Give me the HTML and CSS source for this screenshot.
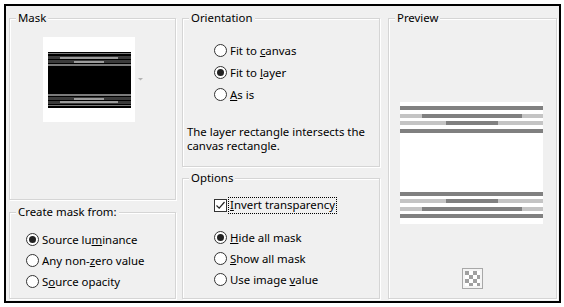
FILE: index.html
```html
<!DOCTYPE html>
<html>
<head>
  <title>Mask dialog</title>
  <link rel="stylesheet" href="styles.css">
</head>
<body>
  <div class="dialog">
    <div class="col col-left">
      <fieldset class="group mask-group">
        <legend>Mask</legend>
        <div class="mask-row">
          <div class="mask-thumb">
            <svg width="83" height="56" viewBox="0 0 83 56">
              <rect width="83" height="56" fill="#000"/>
              <rect y="1" width="83" height="1" fill="#7a7a7a"/>
              <rect y="4" width="83" height="3" fill="#3a3a3a"/>
              <rect x="12" y="5" width="58" height="2" fill="#9c9c9c"/>
              <rect y="8" width="83" height="3" fill="#3a3a3a"/>
              <rect x="26" y="9" width="30" height="2" fill="#9c9c9c"/>
              <rect y="12" width="83" height="2" fill="#7a7a7a"/>
              <rect y="42" width="83" height="2" fill="#7a7a7a"/>
              <rect y="45" width="83" height="3" fill="#3a3a3a"/>
              <rect x="26" y="46" width="30" height="2" fill="#9c9c9c"/>
              <rect y="49" width="83" height="3" fill="#3a3a3a"/>
              <rect x="12" y="49" width="58" height="2" fill="#9c9c9c"/>
              <rect y="53" width="83" height="1" fill="#7a7a7a"/>
            </svg>
          </div>
          <svg class="drop-mark" width="5" height="3" viewBox="0 0 5 3">
            <path d="M0 0 H5 L2.5 2.5 Z" fill="#b4b4b4"/>
          </svg>
        </div>
      </fieldset>
      <fieldset class="group create-group">
        <legend>Create mask from:</legend>
        <div class="opt"><span class="radio checked"></span><span>Source lu<u>m</u>inance</span></div>
        <div class="opt"><span class="radio"></span><span>Any non-<u>z</u>ero value</span></div>
        <div class="opt"><span class="radio"></span><span>S<u>o</u>urce opacity</span></div>
      </fieldset>
    </div>

    <div class="col col-mid">
      <fieldset class="group orient-group">
        <legend>Orientation</legend>
        <div class="opt"><span class="radio"></span><span>Fit to <u>c</u>anvas</span></div>
        <div class="opt"><span class="radio checked"></span><span>Fit to <u>l</u>ayer</span></div>
        <div class="opt"><span class="radio"></span><span><u>A</u>s is</span></div>
        <p class="note">The layer rectangle intersects the canvas rectangle.</p>
      </fieldset>
      <fieldset class="group options-group">
        <legend>Options</legend>
        <div class="opt check-row">
          <span class="checkbox">
            <svg width="11" height="11" viewBox="0 0 11 11">
              <path d="M1.5 5.5 L4.2 8.2 L9.5 2" fill="none" stroke="#222" stroke-width="1.2"/>
            </svg>
          </span>
          <span class="focus"><u>I</u>nvert transparency</span>
        </div>
        <div class="opt first-radio"><span class="radio checked"></span><span><u>H</u>ide all mask</span></div>
        <div class="opt"><span class="radio"></span><span><u>S</u>how all mask</span></div>
        <div class="opt"><span class="radio"></span><span>Use image <u>v</u>alue</span></div>
      </fieldset>
    </div>

    <fieldset class="group preview-group">
      <legend>Preview</legend>
      <div class="preview-img">
        <div class="bar dark"></div>
        <div class="bar light"><span class="wide"></span></div>
        <div class="bar light"><span class="narrow"></span></div>
        <div class="bar dark"></div>
        <div class="blank"></div>
        <div class="bar dark"></div>
        <div class="bar light"><span class="narrow"></span></div>
        <div class="bar light"><span class="wide"></span></div>
        <div class="bar dark"></div>
      </div>
      <div class="bg-icon">
        <svg width="21" height="21" viewBox="0 0 21 21">
          <rect x="0.5" y="0.5" width="20" height="20" fill="#f4f4f4" stroke="#a8a8a8"/>
          <rect x="3" y="3" width="15" height="15" fill="#fff"/>
          <path d="M3 3h4v4H3z M11 3h4v4h-4z M7 7h4v4H7z M15 7h3v4h-3z M3 11h4v4H3z M11 11h4v4h-4z M7 15h4v3H7z M15 15h3v3h-3z" fill="#a0a0a0"/>
        </svg>
      </div>
    </fieldset>
  </div>
</body>
</html>
```

FILE: styles.css
```css
body {
  margin: 0;
  background: #fff;
  font-family: "Noto Sans", "Open Sans", sans-serif;
  font-size: 11.4px;
  color: #000;
}

.dialog {
  display: flex;
  gap: 6px;
  box-sizing: border-box;
  width: 557px;
  height: 299px;
  margin: 4px 0 0 4px;
  padding: 5px 2px 2px 3px;
  border: 2px solid #000;
  background: #f0f0f0;
}

.col {
  display: flex;
  flex-direction: column;
}

.col-left {
  width: 167px;
  gap: 5px;
}

.col-mid {
  width: 198px;
  gap: 4px;
  margin-right: 2px;
}

.group {
  box-sizing: border-box;
  margin: 0;
  padding: 0;
  min-width: 0;
  border: 1px solid #d5d5d5;
  box-shadow: inset 1px 1px 0 #fff, 1px 1px 0 #fff;
}

.group legend {
  margin-left: 6px;
  padding: 0 2px;
  line-height: 14px;
  background: #f0f0f0;
}

.mask-group {
  height: 189px;
}

.create-group,
.options-group {
  flex: 1;
}

.orient-group {
  height: 156px;
}

.preview-group {
  width: 169px;
}

/* mask thumbnail */
.mask-row {
  display: flex;
  align-items: center;
  margin: 12px 0 0 33px;
}

.mask-thumb {
  width: 92px;
  height: 85px;
  box-sizing: border-box;
  padding: 15px 4px 14px 5px;
  background: #fff;
}

.mask-thumb svg {
  display: block;
}

.drop-mark {
  margin-left: 3px;
}

/* radio / check rows */
.opt {
  display: flex;
  align-items: center;
  height: 22px;
  white-space: nowrap;
}

.radio,
.checkbox {
  display: flex;
  align-items: center;
  justify-content: center;
  box-sizing: border-box;
  width: 13px;
  height: 13px;
  margin-right: 3px;
  border: 1px solid #333;
  background: #fff;
  flex-shrink: 0;
}

.radio {
  border-radius: 50%;
}

.radio.checked::after {
  content: "";
  width: 7px;
  height: 7px;
  border-radius: 50%;
  background: #222;
}

.checkbox svg {
  display: block;
}

.orient-group .opt {
  margin-left: 31px;
}

.orient-group .opt:first-of-type {
  margin-top: 14px;
}

.note {
  margin: 20px 0 0 4px;
  line-height: 14px;
}

.create-group .opt {
  height: 21px;
  margin-left: 16px;
}

.create-group .opt:first-of-type {
  margin-top: 10px;
}

.options-group .opt {
  height: 21px;
  margin-left: 31px;
}

.options-group .check-row {
  margin-top: 10px;
}

.options-group .first-radio {
  margin-top: 11px;
}

.focus {
  margin-left: -2px;
  padding: 0 1px 1px 1px;
  border: 1px dotted #000;
  line-height: 14px;
}

/* preview */
.preview-img {
  display: flex;
  flex-direction: column;
  width: 143px;
  height: 122px;
  box-sizing: border-box;
  margin: 77px 0 0 11px;
  padding: 4px 0 2px;
  background: #fff;
}

.bar {
  display: flex;
  justify-content: center;
  height: 4px;
  margin-bottom: 3.6px;
}

.bar.dark {
  background: #808080;
}

.bar.light {
  background: #c4c4c4;
}

.bar .wide {
  width: 100px;
  background: #808080;
}

.bar .narrow {
  width: 52px;
  background: #808080;
}

.blank {
  flex: 1;
  margin-bottom: 3px;
}

.bg-icon {
  display: flex;
  justify-content: center;
  margin-top: 44px;
}

.bg-icon svg {
  display: block;
}
```
